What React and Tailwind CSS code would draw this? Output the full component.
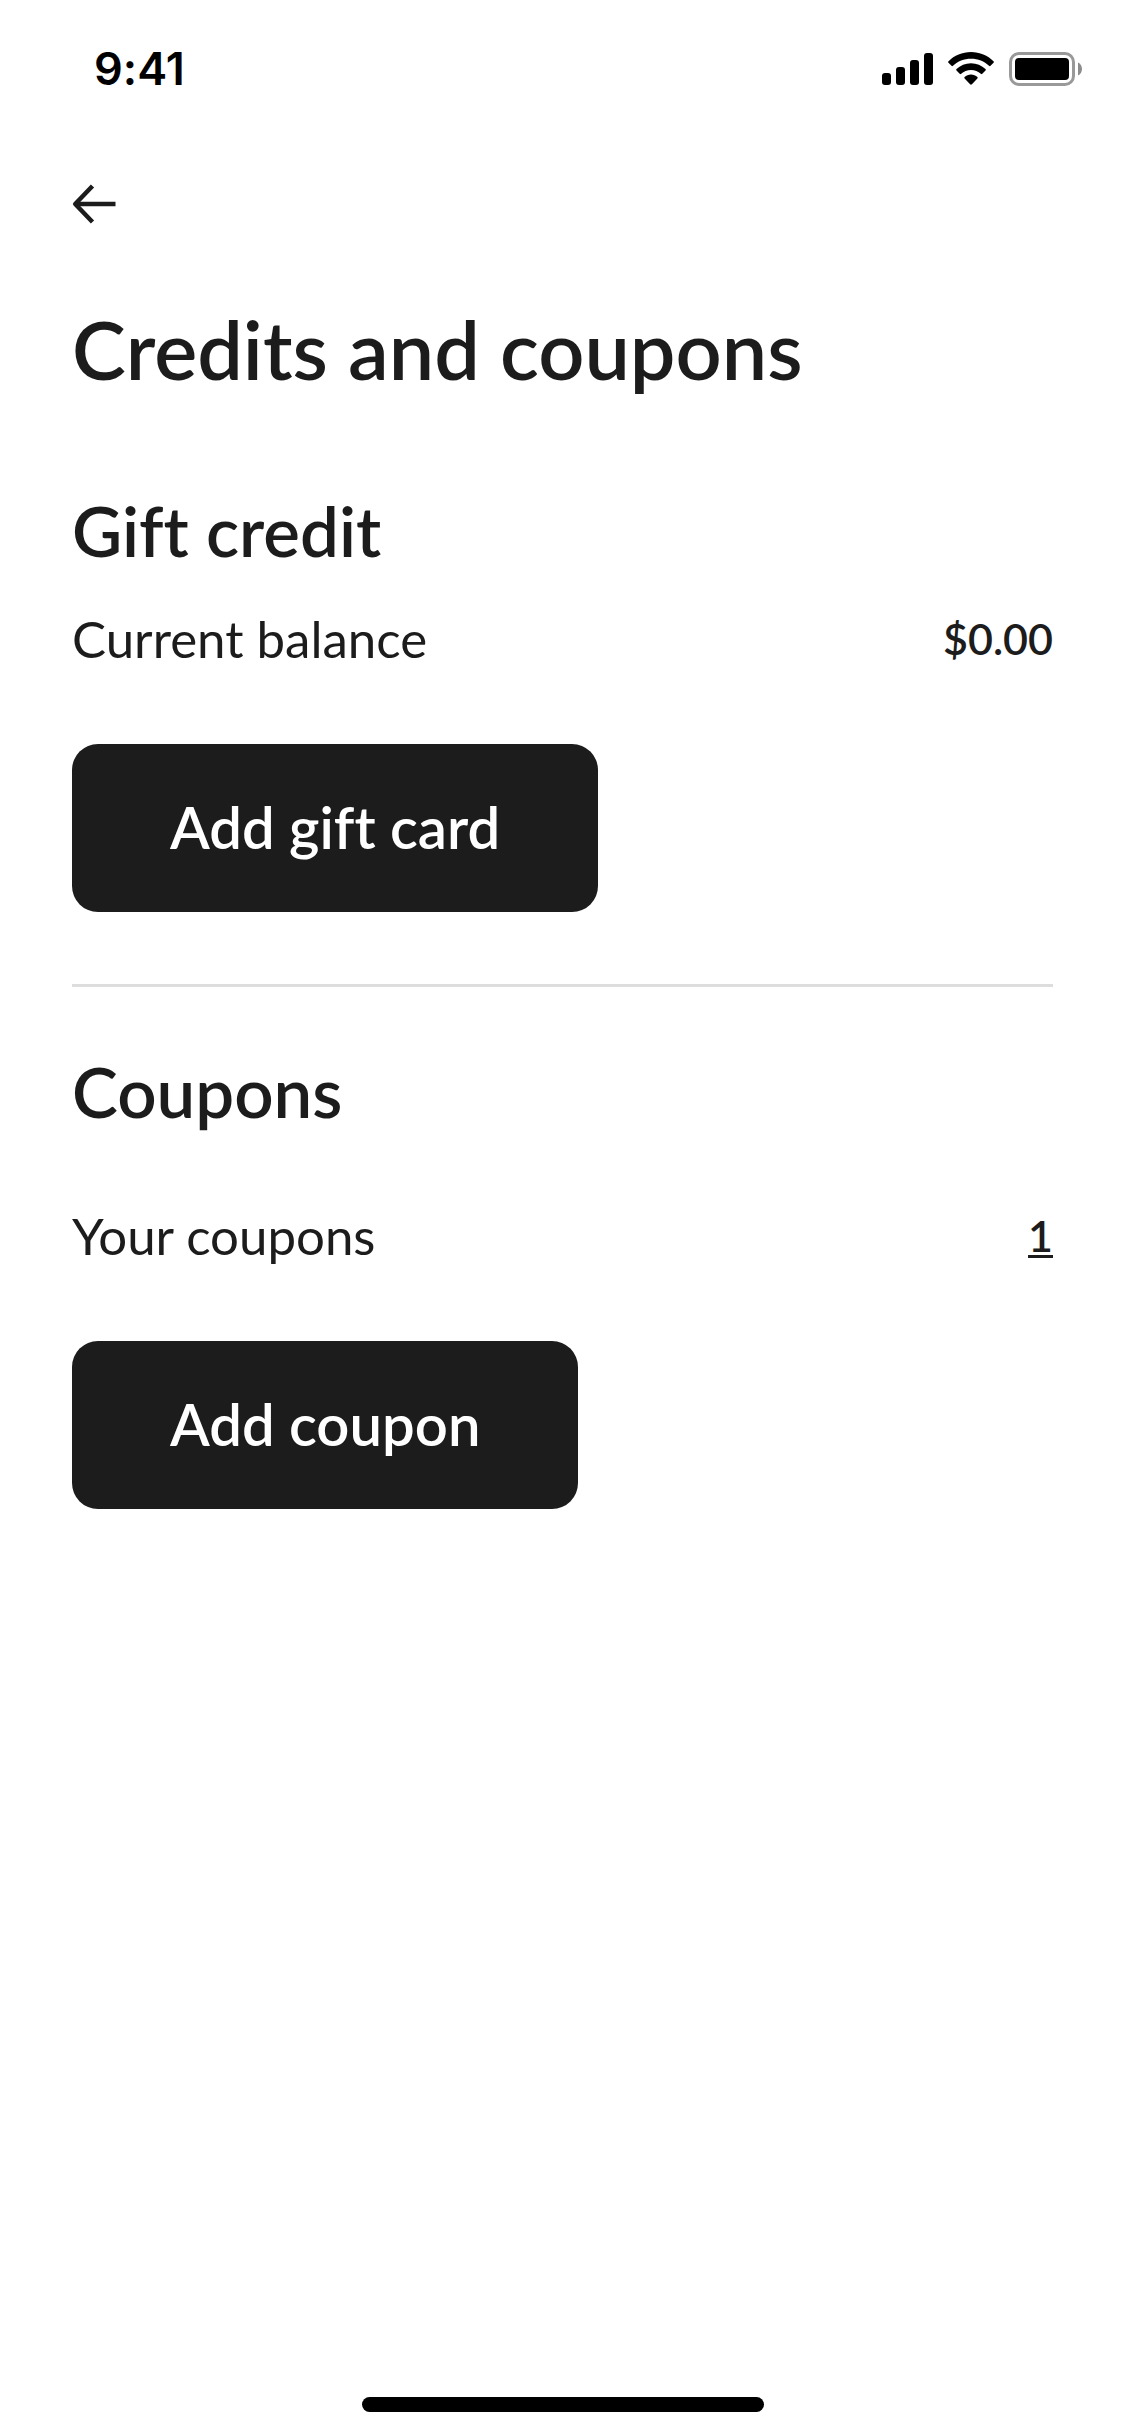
import React from 'react';

const StatusBar = () => (
  <header className="flex items-center justify-between pl-[94px] pr-[43px] pt-[42px] text-black">
    <span className="font-['Inter',sans-serif] text-[45px] leading-[54px] font-semibold">9:41</span>
    <div className="flex items-center gap-[15px]">
      <svg width="51" height="34" viewBox="0 0 51 34" fill="currentColor" aria-hidden="true">
        <rect x="0" y="21" width="9" height="12" rx="3" />
        <rect x="14" y="15" width="9" height="18" rx="3" />
        <rect x="28" y="8" width="9" height="25" rx="3" />
        <rect x="42" y="1" width="9" height="32" rx="3" />
      </svg>
      <svg width="46" height="34" viewBox="0 0 46 34" fill="currentColor" aria-hidden="true">
        <path d="M23 0C14.2 0 6.300 3.500.500 9.200q-.8.800 0 1.600L3.500 13.800q.7.700 1.500 0C9.700 9.300 16 6.700 23 6.700s13.300 2.600 18 7.100q.8.700 1.500 0l3-3q.8-.8 0-1.600C39.700 3.500 31.800 0 23 0Z" />
        <path d="M23 11.200c-5.600 0-10.700 2.200-14.500 5.800q-.8.800 0 1.600l3.200 3.200q.7.700 1.500 0c2.600-2.400 6-3.800 9.800-3.800s7.200 1.400 9.800 3.800q.8.700 1.500 0l3.200-3.200q.8-.8 0-1.600c-3.800-3.600-8.900-5.800-14.500-5.800Z" />
        <path d="M23 22.600c-2.500 0-4.700.9-6.400 2.400q-.7.700 0 1.400l5.500 5.900q.9.900 1.800 0l5.500-5.900q.7-.7 0-1.400c-1.700-1.500-3.900-2.400-6.400-2.400Z" />
      </svg>
      <svg width="73" height="34" viewBox="0 0 73 34" aria-hidden="true">
        <rect x="1.500" y="1.500" width="63" height="31" rx="8.500" fill="none" stroke="#999999" strokeWidth="3" />
        <rect x="6" y="6" width="54" height="22" rx="4" fill="#000000" />
        <path d="M69 10.500c2.400 1 4 3.600 4 6.500s-1.600 5.500-4 6.500Z" fill="#8c8c8c" />
      </svg>
    </div>
  </header>
);

const Row = ({ label, children }) => (
  <div className="mb-[75px] flex items-center justify-between leading-[60px]">
    <p className="text-[51px]">{label}</p>
    {children}
  </div>
);

const ActionButton = ({ children }) => (
  <button type="button" className="h-[168px] rounded-[26px] bg-[#1c1c1c] px-[98px] pb-0.5 text-[58px] leading-[64px] font-semibold text-white">
    {children}
  </button>
);

const App = () => {
  return (
    <div className="flex min-h-screen flex-col bg-white font-['Lato',sans-serif] text-[#1c1c1c] [font-variant-ligatures:none]">
      <StatusBar />

      <main className="flex-1 px-[72px] pt-[88px]">
        <button type="button" aria-label="Back" className="block">
          <svg width="44" height="40" viewBox="0 0 44 40" fill="none" stroke="currentColor" strokeWidth="4.500" aria-hidden="true">
            <path d="M20.500 2 3.200 20 20.500 38" strokeLinejoin="round" />
            <path d="M3.200 20H43.500" />
          </svg>
        </button>

        <h1 className="mt-[77px] text-[81px] leading-[96px] font-semibold">Credits and coupons</h1>

        <section className="mt-[94px]">
          <h2 className="mb-[38px] text-[69px] leading-[80px] font-semibold">Gift credit</h2>
          <Row label="Current balance">
            <span className="text-[43px] font-semibold">$0.00</span>
          </Row>
          <ActionButton>Add gift card</ActionButton>
        </section>

        <hr className="mt-[72px] border-t-3 border-[#dddddd]" />

        <section className="mt-[65px]">
          <h2 className="mb-[74px] text-[69px] leading-[80px] font-semibold">Coupons</h2>
          <Row label="Your coupons">
            <a href="#coupons" className="text-[43px] font-semibold underline decoration-3 underline-offset-3">1</a>
          </Row>
          <ActionButton>Add coupon</ActionButton>
        </section>
      </main>

      <div className="mx-auto mb-6 h-[15px] w-[402px] rounded-full bg-black" />
    </div>
  );
};

export default App;
